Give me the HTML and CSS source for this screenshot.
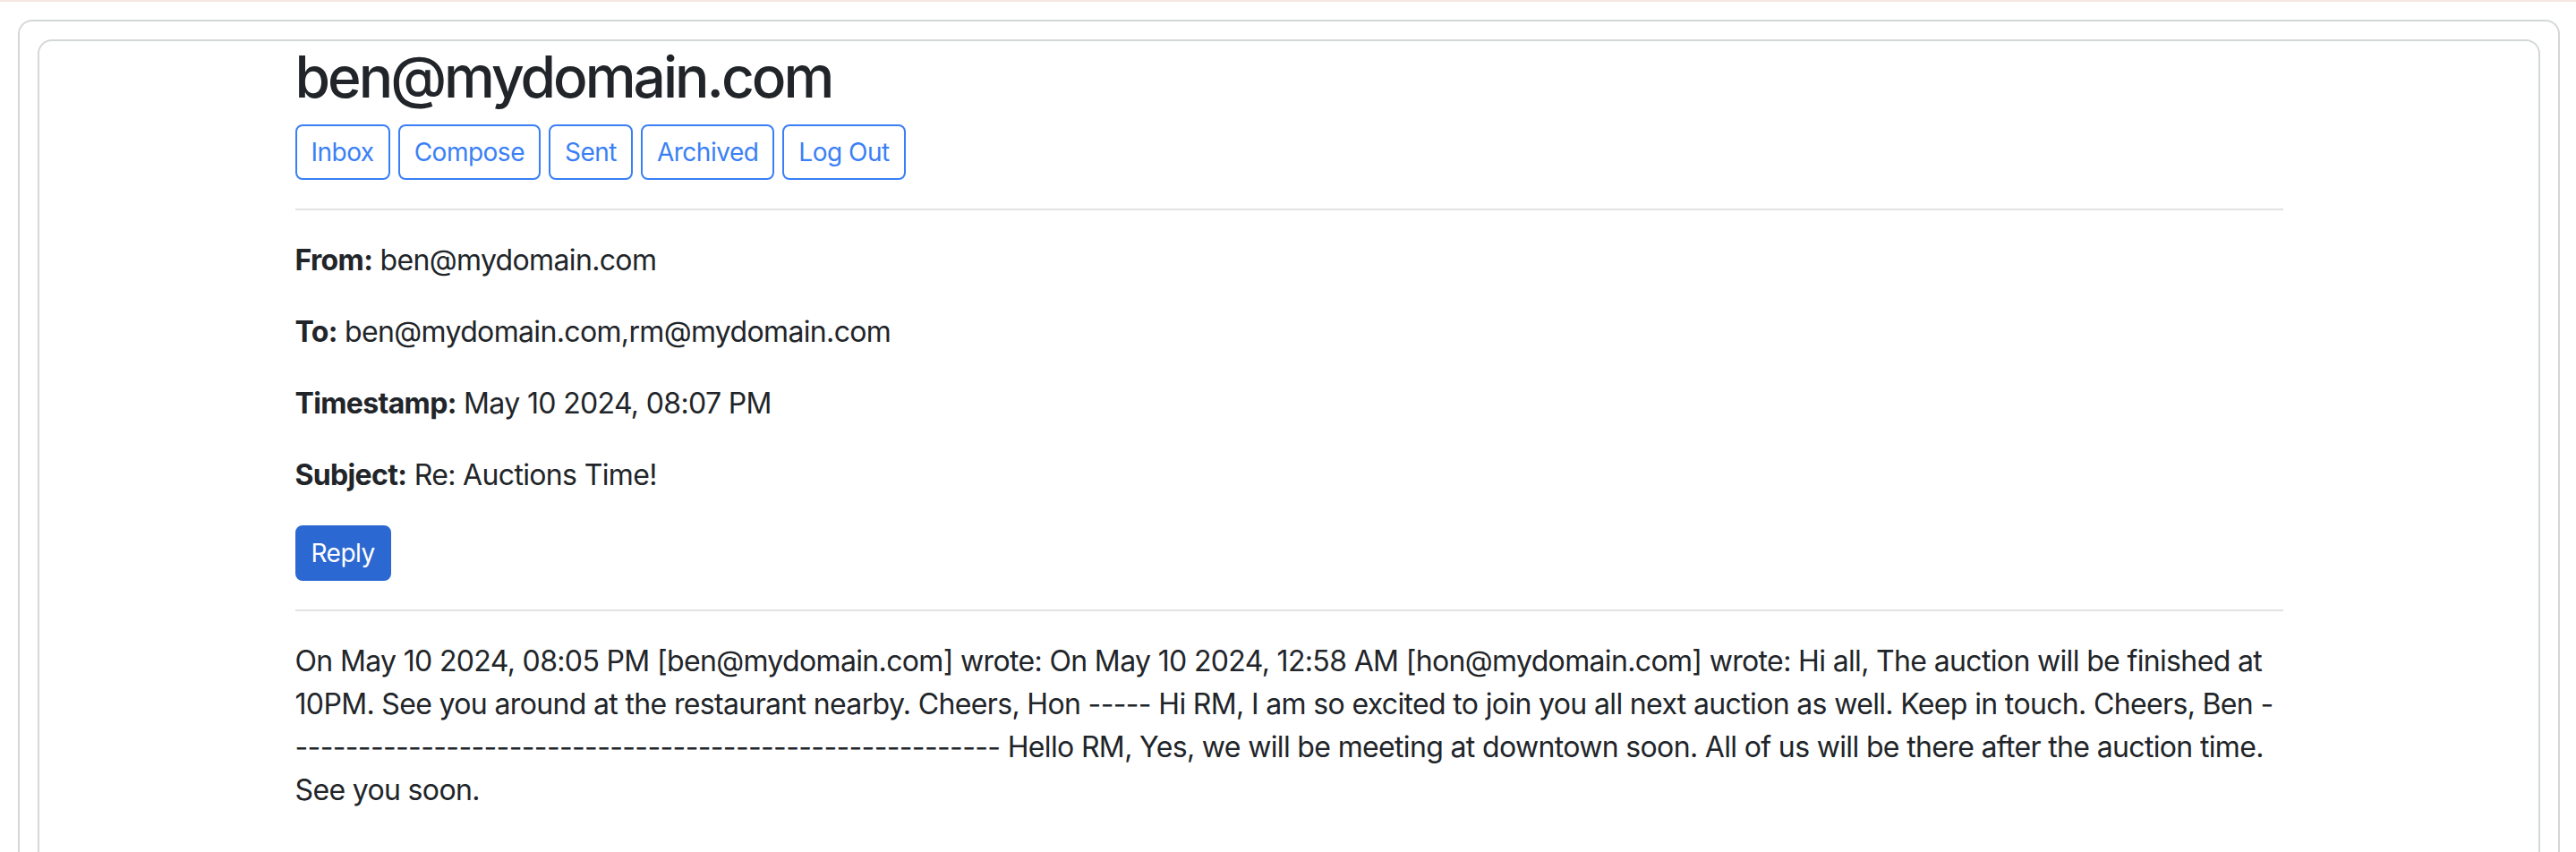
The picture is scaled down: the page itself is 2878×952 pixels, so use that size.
FILE: index.html
```html
<!DOCTYPE html>
<html lang="en">
<head>
<meta charset="utf-8">
<title>Email</title>
<link rel="stylesheet" href="styles.css">
</head>
<body>
<div class="topbar"></div>
<div class="outer">
  <div class="inner">
    <main class="container">
      <h2 class="title">ben@mydomain.com</h2>
      <nav class="nav">
        <a class="btn btn-outline" href="#">Inbox</a>
        <a class="btn btn-outline" href="#">Compose</a>
        <a class="btn btn-outline" href="#">Sent</a>
        <a class="btn btn-outline" href="#">Archived</a>
        <a class="btn btn-outline" href="#">Log Out</a>
      </nav>
      <hr class="rule">
      <p class="field"><strong>From:</strong> ben@mydomain.com</p>
      <p class="field"><strong>To:</strong> ben@mydomain.com,rm@mydomain.com</p>
      <p class="field"><strong>Timestamp:</strong> May 10 2024, 08:07 PM</p>
      <p class="field"><strong>Subject:</strong> Re: Auctions Time!</p>
      <div class="actions">
        <button class="btn btn-primary" type="button">Reply</button>
      </div>
      <hr class="rule">
      <p class="field message">On May 10 2024, 08:05 PM [ben@mydomain.com] wrote: On May 10 2024, 12:58 AM [hon@mydomain.com] wrote: Hi all, The auction will be finished at 10PM. See you around at the restaurant nearby. Cheers, Hon ----- Hi RM, I am so excited to join you all next auction as well. Keep in touch. Cheers, Ben --------------------------------------------------------- Hello RM, Yes, we will be meeting at downtown soon. All of us will be there after the auction time. See you soon.</p>
    </main>
  </div>
</div>
</body>
</html>
```

FILE: styles.css
```css
html, body {
  margin: 0;
  padding: 0;
  background: #ffffff;
}

body {
  font-family: Inter, "Noto Sans", "Liberation Sans", sans-serif;
  font-feature-settings: "calt" 0;
  color: #212529;
  font-size: 32px;
  line-height: 48px;
  letter-spacing: -0.65px;
}

.topbar {
  height: 2px;
  background: #f6e7e1;
}

.outer {
  margin: 20px 18px 0 20px;
  border: 2px solid #d3d8d7;
  border-bottom: 0;
  border-radius: 16px 16px 0 0;
  padding: 20px 20px 0 20px;
}

.inner {
  border: 2px solid #d3d8d7;
  border-bottom: 0;
  border-radius: 16px 16px 0 0;
  min-height: 960px;
}

.container {
  width: 2221px;
  margin: 0 auto;
  padding-top: 2px;
}

.title {
  margin: 0 0 14px 0;
  font-size: 64px;
  line-height: 1.2;
  font-weight: 500;
  letter-spacing: -3px;
  color: #212529;
}

.nav {
  display: flex;
  gap: 9px;
}

.btn {
  display: inline-block;
  box-sizing: border-box;
  height: 62px;
  padding: 8px 16px;
  border: 2px solid transparent;
  border-radius: 8px;
  font-family: inherit;
  font-feature-settings: "calt" 0;
  font-size: 28px;
  line-height: 42px;
  letter-spacing: -0.5px;
  text-decoration: none;
  background: transparent;
  cursor: pointer;
}

.btn-outline {
  color: #3a7ff5;
  border-color: #3a7ff5;
}

.btn-primary {
  color: #ffffff;
  background: #2c68d2;
  border-color: #2c68d2;
}

.rule {
  margin: 32px 0;
  border: 0;
  border-top: 2px solid #e2e2e2;
  height: 0;
}

.field {
  margin: 0 0 32px 0;
}

.field strong {
  font-weight: 700;
}

.actions {
  display: flex;
}
```
